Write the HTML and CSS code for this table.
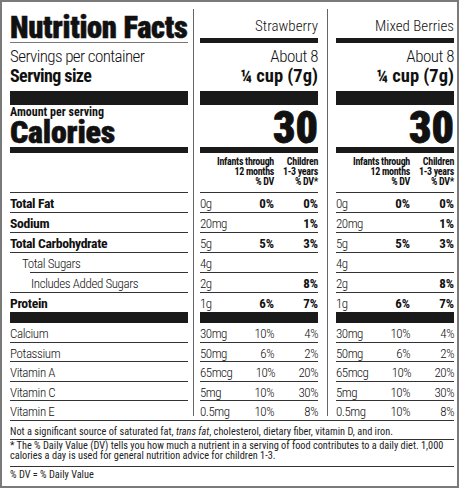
FILE: index.html
```html
<!DOCTYPE html>
<html lang="en">
<head>
    <meta charset="UTF-8">
    <meta name="viewport" content="width=device-width, initial-scale=1.0">
    <title>Nutrition Facts</title>
    <link rel="stylesheet" href="styles.css">
</head>
<body>

    <div class="label">
        <div class="facts">
            <!-- heading -->
            <div class="lab top"><h1>Nutrition Facts</h1></div>
            <div class="v1 top flavor">Strawberry</div>
            <div class="v2 top flavor">Mixed Berries</div>

            <div class="lab serving">
                <p class="light">Servings per container</p>
                <p class="strong">Serving size</p>
            </div>
            <div class="v1 serving">
                <p class="light">About 8</p>
                <p class="strong">¼ cup (7g)</p>
            </div>
            <div class="v2 serving">
                <p class="light">About 8</p>
                <p class="strong">¼ cup (7g)</p>
            </div>

            <div class="lab bar bar-lg"></div>
            <div class="v1 bar bar-lg"></div>
            <div class="v2 bar bar-lg"></div>

            <!-- calories -->
            <div class="lab cal">
                <p class="amount">Amount per serving</p>
                <h2>Calories</h2>
            </div>
            <div class="v1 cal kcal">30</div>
            <div class="v2 cal kcal">30</div>

            <div class="lab bar bar-sm"></div>
            <div class="v1 bar bar-sm"></div>
            <div class="v2 bar bar-sm"></div>

            <div class="lab dv-head"></div>
            <div class="v1 dv-head">
                <span>Infants through<br>12 months<br>% DV</span>
                <span class="kid">Children<br>1-3 years<br>% DV*</span>
            </div>
            <div class="v2 dv-head">
                <span>Infants through<br>12 months<br>% DV</span>
                <span class="kid">Children<br>1-3 years<br>% DV*</span>
            </div>

            <!-- macros -->
            <div class="lab row">Total Fat</div>
            <div class="v1 row"><span class="amt">0g</span><span class="pct">0%</span><span class="pct">0%</span></div>
            <div class="v2 row"><span class="amt">0g</span><span class="pct">0%</span><span class="pct">0%</span></div>

            <div class="lab row">Sodium</div>
            <div class="v1 row"><span class="amt">20mg</span><span class="pct"></span><span class="pct">1%</span></div>
            <div class="v2 row"><span class="amt">20mg</span><span class="pct"></span><span class="pct">1%</span></div>

            <div class="lab row">Total Carbohydrate</div>
            <div class="v1 row"><span class="amt">5g</span><span class="pct">5%</span><span class="pct">3%</span></div>
            <div class="v2 row"><span class="amt">5g</span><span class="pct">5%</span><span class="pct">3%</span></div>

            <div class="lab row sub">Total Sugars</div>
            <div class="v1 row"><span class="amt">4g</span><span class="pct"></span><span class="pct"></span></div>
            <div class="v2 row"><span class="amt">4g</span><span class="pct"></span><span class="pct"></span></div>

            <div class="lab row subsub">Includes Added Sugars</div>
            <div class="v1 row"><span class="amt">2g</span><span class="pct"></span><span class="pct">8%</span></div>
            <div class="v2 row"><span class="amt">2g</span><span class="pct"></span><span class="pct">8%</span></div>

            <div class="lab row last">Protein</div>
            <div class="v1 row last"><span class="amt">1g</span><span class="pct">6%</span><span class="pct">7%</span></div>
            <div class="v2 row last"><span class="amt">1g</span><span class="pct">6%</span><span class="pct">7%</span></div>

            <div class="lab bar bar-md"></div>
            <div class="v1 bar bar-md"></div>
            <div class="v2 bar bar-md"></div>

            <!-- vitamins and minerals -->
            <div class="lab row mineral">Calcium</div>
            <div class="v1 row mineral"><span class="amt">30mg</span><span class="pct">10%</span><span class="pct">4%</span></div>
            <div class="v2 row mineral"><span class="amt">30mg</span><span class="pct">10%</span><span class="pct">4%</span></div>

            <div class="lab row mineral">Potassium</div>
            <div class="v1 row mineral"><span class="amt">50mg</span><span class="pct">6%</span><span class="pct">2%</span></div>
            <div class="v2 row mineral"><span class="amt">50mg</span><span class="pct">6%</span><span class="pct">2%</span></div>

            <div class="lab row mineral">Vitamin A</div>
            <div class="v1 row mineral"><span class="amt">65mcg</span><span class="pct">10%</span><span class="pct">20%</span></div>
            <div class="v2 row mineral"><span class="amt">65mcg</span><span class="pct">10%</span><span class="pct">20%</span></div>

            <div class="lab row mineral">Vitamin C</div>
            <div class="v1 row mineral"><span class="amt">5mg</span><span class="pct">10%</span><span class="pct">30%</span></div>
            <div class="v2 row mineral"><span class="amt">5mg</span><span class="pct">10%</span><span class="pct">30%</span></div>

            <div class="lab row mineral last">Vitamin E</div>
            <div class="v1 row mineral last"><span class="amt">0.5mg</span><span class="pct">10%</span><span class="pct">8%</span></div>
            <div class="v2 row mineral last"><span class="amt">0.5mg</span><span class="pct">10%</span><span class="pct">8%</span></div>
        </div>

        <div class="notes">
            <p class="note-one">Not a significant source of saturated fat, <i>trans fat</i>, cholesterol, dietary fiber, vitamin D, and iron.</p>
            <p class="note-two">* The % Daily Value (DV) tells you how much a nutrient in a serving of food contributes to a daily diet. 1,000<br>calories a day is used for general nutrition advice for children 1-3.</p>
            <p class="note-three">% DV = % Daily Value</p>
        </div>
    </div>

</body>
</html>
```
FILE: styles.css
```css
* { box-sizing: border-box; margin: 0; padding: 0; }
body { margin: 0; background: #fff; color: #111; font-family: "Roboto Condensed", "Liberation Sans", sans-serif; }

.label { width: 459px; height: 488px; border: 2px solid #7a7a7a; padding: 7px 3px 0 8px; }

.facts {
    display: grid;
    grid-template-columns: 178px 12px 118px 18px 118px;
    background:
        linear-gradient(#666, #666) 183px 0 / 1px calc(100% - 4px) no-repeat,
        linear-gradient(#666, #666) 317px 0 / 1px calc(100% - 4px) no-repeat;
}
.lab { grid-column: 1; }
.v1 { grid-column: 3; }
.v2 { grid-column: 5; }

/* heading */
.top { height: 34px; }
.top.lab { border-bottom: 1px solid #777; }
h1 { font-size: 30.5px; line-height: 31px; padding-top: 3px; font-weight: 900; letter-spacing: -0.3px; white-space: nowrap; -webkit-text-stroke: 0.5px #111; }
.flavor { border-bottom: 5px solid #1a1a1a; text-align: right; font-size: 15px; font-weight: 300; line-height: 18px; padding-top: 8px; }

.serving { height: 48px; padding-top: 3px; line-height: 20px; white-space: nowrap; }
.serving.v1, .serving.v2 { text-align: right; }
.serving .light { font-size: 17px; font-weight: 300; letter-spacing: -0.6px; }
.serving .strong { font-size: 18px; font-weight: 700; letter-spacing: -0.6px; }
.serving.v1 .light, .serving.v2 .light { letter-spacing: -0.5px; }
.serving.v1 .strong, .serving.v2 .strong { font-size: 18.5px; letter-spacing: 0; }

.bar { background: #1a1a1a; }
.bar-lg { height: 14px; }
.bar-md { height: 11px; }
.bar-sm { height: 6px; }

/* calories */
.cal { height: 42px; }
.amount { font-size: 12px; line-height: 13px; font-weight: 700; padding-top: 1px; }
h2 { font-size: 32px; line-height: 26px; font-weight: 900; letter-spacing: -0.2px; -webkit-text-stroke: 0.5px #111; }
.kcal { text-align: right; font-size: 44px; line-height: 36px; font-weight: 900; padding-top: 5px; -webkit-text-stroke: 0.8px #111; }

.dv-head { height: 40px; border-bottom: 1px solid #333; }
.dv-head.v1, .dv-head.v2 { display: flex; justify-content: flex-end; padding-top: 4px; font-size: 10px; line-height: 10px; font-weight: 700; letter-spacing: -0.3px; text-align: right; white-space: nowrap; }
.kid { width: 44px; }

/* nutrient rows */
.row { height: 20px; border-bottom: 1px solid #333; padding-top: 2px; font-size: 13px; line-height: 17px; white-space: nowrap; }
.row.lab { font-size: 13.7px; font-weight: 700; letter-spacing: -0.35px; }
.row.v1, .row.v2 { display: flex; }
.amt { flex: 1; font-weight: 300; letter-spacing: -0.5px; }
.pct { width: 44px; text-align: right; font-weight: 700; }

.row.sub { padding-left: 12px; font-size: 13px; font-weight: 300; letter-spacing: -0.4px; border-bottom: 0; background: linear-gradient(#333, #333) 20px 100% / calc(100% - 20px) 1px no-repeat; }
.row.subsub { padding-left: 21px; font-size: 13px; font-weight: 300; letter-spacing: -0.4px; }

.row.mineral { height: 19.5px; }
.row.mineral.lab { font-size: 13px; font-weight: 300; letter-spacing: -0.4px; }
.row.mineral .pct { font-weight: 300; letter-spacing: -0.5px; }
.row.last { height: 19px; border-bottom: 0; }

/* footnotes */
.notes { border-top: 1px solid #333; font-size: 10.3px; color: #222; }
.notes p { border-bottom: 1px solid #333; white-space: nowrap; }
.note-one { padding: 4px 0 1px; line-height: 13px; }
.note-two { padding: 1px 0 5px; line-height: 10px; }
.notes .note-three { border-bottom: 0; padding-top: 1px; line-height: 13px; }
```
